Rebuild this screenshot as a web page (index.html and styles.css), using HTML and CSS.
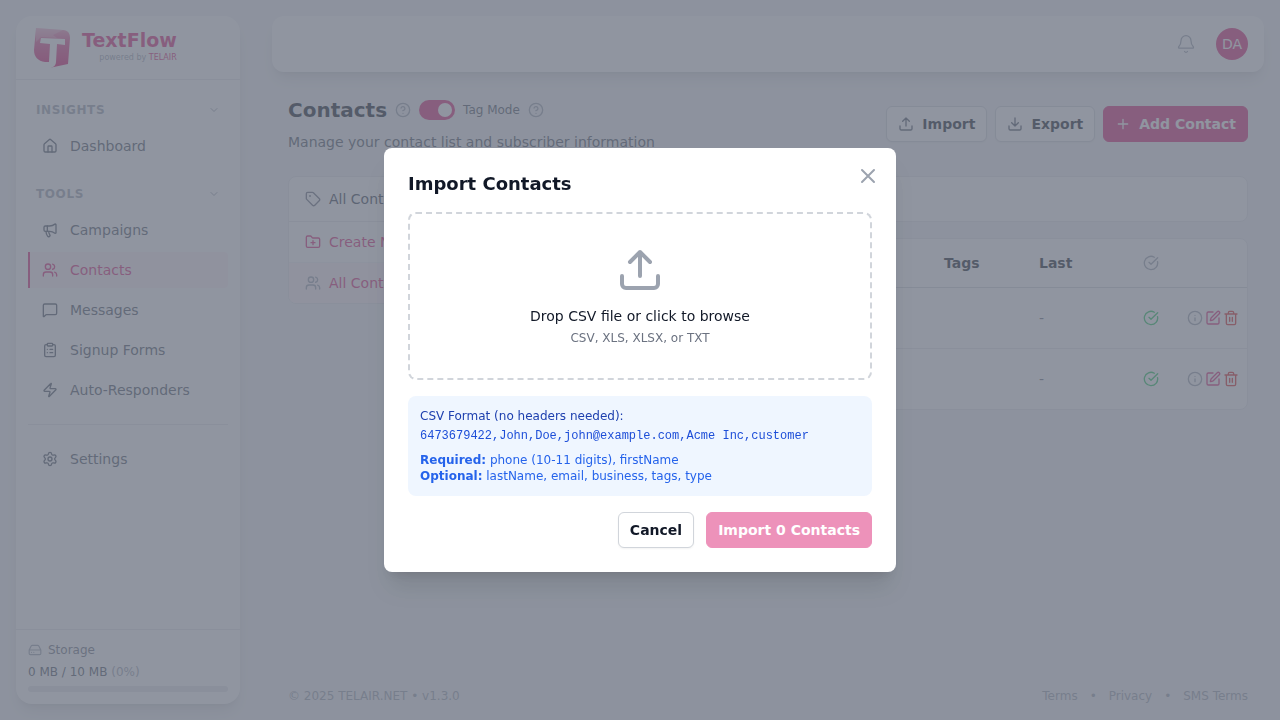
FILE: index.html
```html
<!DOCTYPE html>
<html lang="en">

<head>
    <meta charset="UTF-8">
    <meta name="viewport" content="width=device-width, initial-scale=1">
    <title>Contacts - TextFlow</title>
    <link rel="stylesheet" href="styles.css">
</head>

<body>
    <!-- shared icons -->
    <svg class="sprite" aria-hidden="true">
        <symbol id="i-chevron" viewBox="0 0 24 24"><path d="m6 9 6 6 6-6"/></symbol>
        <symbol id="i-help" viewBox="0 0 24 24"><circle cx="12" cy="12" r="10"/><path d="M9.09 9a3 3 0 0 1 5.83 1c0 2-3 3-3 3M12 17h.01"/></symbol>
        <symbol id="i-users" viewBox="0 0 24 24"><path d="M16 21v-2a4 4 0 0 0-4-4H6a4 4 0 0 0-4 4v2M16 3.128a4 4 0 0 1 0 7.744M22 21v-2a4 4 0 0 0-3-3.87"/><circle cx="9" cy="7" r="4"/></symbol>
        <symbol id="i-upload" viewBox="0 0 24 24"><path d="M12 3v12M17 8l-5-5-5 5M21 15v4a2 2 0 0 1-2 2H5a2 2 0 0 1-2-2v-4"/></symbol>
        <symbol id="i-check" viewBox="0 0 24 24"><path d="M21.801 10A10 10 0 1 1 17 3.335M9 11l3 3L22 4"/></symbol>
        <symbol id="i-info" viewBox="0 0 24 24"><circle cx="12" cy="12" r="10"/><path d="M12 16v-4M12 8h.01"/></symbol>
        <symbol id="i-edit" viewBox="0 0 24 24"><path d="M12 3H5a2 2 0 0 0-2 2v14a2 2 0 0 0 2 2h14a2 2 0 0 0 2-2v-7"/><path d="M18.375 2.625a1 1 0 0 1 3 3l-9.013 9.014a2 2 0 0 1-.853.505l-2.873.84a.5.5 0 0 1-.62-.62l.84-2.873a2 2 0 0 1 .506-.852z"/></symbol>
        <symbol id="i-trash" viewBox="0 0 24 24"><path d="M3 6h18M19 6v14a2 2 0 0 1-2 2H7a2 2 0 0 1-2-2V6M8 6V4a2 2 0 0 1 2-2h4a2 2 0 0 1 2 2v2M10 11v6M14 11v6"/></symbol>
    </svg>

    <div class="layout">
        <aside class="sidebar">
            <div class="brand">
                <svg class="brand-logo" viewBox="0 0 40 40" aria-hidden="true">
                    <defs>
                        <linearGradient id="logo-fill" x1="0" y1="0" x2="0" y2="1">
                            <stop offset="0" stop-color="#f29cc0"/>
                            <stop offset=".35" stop-color="#e0508f"/>
                            <stop offset="1" stop-color="#d40f68"/>
                        </linearGradient>
                    </defs>
                    <path fill="url(#logo-fill)" d="M4 0l27 2c5 .5 7 3 7 8l-2 26-19 4 3-6h-7C6 33 2 29 2 22z"/>
                    <path fill="#fff" d="M9 10l24 1v6l-8-1-1 18c0 3-2 5-5 6h-2c-2 0-2-1-2-3 1 0 2-1 2-3l1-18-10-1z"/>
                    <path fill="#fff" opacity=".25" d="M4 0l27 2-10 5 4 3-16-1-5 5z"/>
                </svg>
                <div class="brand-text">
                    <div class="brand-name">TextFlow</div>
                    <div class="brand-sub">powered by <span>TELAIR</span></div>
                </div>
            </div>

            <nav class="nav">
                <button class="nav-group" type="button">INSIGHTS <svg class="icon icon-sm"><use href="#i-chevron"/></svg></button>
                <a class="nav-item" href="#">
                    <svg class="icon" viewBox="0 0 24 24"><path d="M15 21v-8a1 1 0 0 0-1-1h-4a1 1 0 0 0-1 1v8"/><path d="M3 10a2 2 0 0 1 .709-1.528l7-5.999a2 2 0 0 1 2.582 0l7 5.999A2 2 0 0 1 21 10v9a2 2 0 0 1-2 2H5a2 2 0 0 1-2-2z"/></svg>
                    Dashboard
                </a>
                <button class="nav-group nav-group-next" type="button">TOOLS <svg class="icon icon-sm"><use href="#i-chevron"/></svg></button>
                <a class="nav-item" href="#">
                    <svg class="icon" viewBox="0 0 24 24"><path d="M11 6a13 13 0 0 0 8.4-2.8A1 1 0 0 1 21 4v12a1 1 0 0 1-1.6.8A13 13 0 0 0 11 14H5a2 2 0 0 1-2-2V8a2 2 0 0 1 2-2z"/><path d="M6 14a12 12 0 0 0 2.4 7.2 2 2 0 0 0 3.2-2.4A8 8 0 0 1 10 14M8 6v8"/></svg>
                    Campaigns
                </a>
                <a class="nav-item active" href="#"><svg class="icon"><use href="#i-users"/></svg> Contacts</a>
                <a class="nav-item" href="#">
                    <svg class="icon" viewBox="0 0 24 24"><path d="M22 17a2 2 0 0 1-2 2H6.828a2 2 0 0 0-1.414.586l-2.202 2.202A.71.71 0 0 1 2 21.286V5a2 2 0 0 1 2-2h16a2 2 0 0 1 2 2z"/></svg>
                    Messages
                </a>
                <a class="nav-item" href="#">
                    <svg class="icon" viewBox="0 0 24 24"><rect x="8" y="2" width="8" height="4" rx="1"/><path d="M16 4h2a2 2 0 0 1 2 2v14a2 2 0 0 1-2 2H6a2 2 0 0 1-2-2V6a2 2 0 0 1 2-2h2M12 11h4M12 16h4M8 11h.01M8 16h.01"/></svg>
                    Signup Forms
                </a>
                <a class="nav-item" href="#">
                    <svg class="icon" viewBox="0 0 24 24"><path d="M4 14a1 1 0 0 1-.78-1.63l9.9-10.2a.5.5 0 0 1 .86.46l-1.92 6.02A1 1 0 0 0 13 10h7a1 1 0 0 1 .78 1.63l-9.9 10.2a.5.5 0 0 1-.86-.46l1.92-6.02A1 1 0 0 0 11 14z"/></svg>
                    Auto-Responders
                </a>
                <hr class="nav-line">
                <a class="nav-item" href="#">
                    <svg class="icon" viewBox="0 0 24 24"><path d="M9.671 4.136a2.34 2.34 0 0 1 4.659 0 2.34 2.34 0 0 0 3.319 1.915 2.34 2.34 0 0 1 2.33 4.033 2.34 2.34 0 0 0 0 3.831 2.34 2.34 0 0 1-2.33 4.033 2.34 2.34 0 0 0-3.319 1.915 2.34 2.34 0 0 1-4.659 0 2.34 2.34 0 0 0-3.32-1.915 2.34 2.34 0 0 1-2.33-4.033 2.34 2.34 0 0 0 0-3.831A2.34 2.34 0 0 1 6.35 6.051a2.34 2.34 0 0 0 3.319-1.915"/><circle cx="12" cy="12" r="3"/></svg>
                    Settings
                </a>
            </nav>

            <div class="storage">
                <div class="storage-title">
                    <svg class="icon icon-md" viewBox="0 0 24 24"><path d="M22 12H2M5.45 5.11 2 12v6a2 2 0 0 0 2 2h16a2 2 0 0 0 2-2v-6l-3.45-6.89A2 2 0 0 0 16.76 4H7.24a2 2 0 0 0-1.79 1.11zM6 16h.01M10 16h.01"/></svg>
                    Storage
                </div>
                <div class="storage-used">0 MB / 10 MB <span>(0%)</span></div>
                <div class="storage-bar"></div>
            </div>
        </aside>

        <div class="content">
            <header class="topbar">
                <button class="bell" type="button" aria-label="Notifications">
                    <svg class="icon icon-lg thin" viewBox="0 0 24 24"><path d="M10.268 21a2 2 0 0 0 3.464 0M3.262 15.326A1 1 0 0 0 4 17h16a1 1 0 0 0 .74-1.673C19.41 13.956 18 12.499 18 8A6 6 0 0 0 6 8c0 4.499-1.411 5.956-2.738 7.326"/></svg>
                </button>
                <button class="avatar" type="button">DA</button>
            </header>

            <main class="page">
                <div class="page-head">
                    <div>
                        <div class="title-row">
                            <h1>Contacts</h1>
                            <svg class="icon help"><use href="#i-help"/></svg>
                            <input class="toggle" type="checkbox" id="tag-mode" checked>
                            <label for="tag-mode">Tag Mode</label>
                            <svg class="icon help"><use href="#i-help"/></svg>
                        </div>
                        <p class="subtitle">Manage your contact list and subscriber information</p>
                    </div>
                    <div class="actions">
                        <button class="btn" type="button"><svg class="icon"><use href="#i-upload"/></svg> Import</button>
                        <button class="btn" type="button"><svg class="icon" viewBox="0 0 24 24"><path d="M12 15V3M21 15v4a2 2 0 0 1-2 2H5a2 2 0 0 1-2-2v-4M7 10l5 5 5-5"/></svg> Export</button>
                        <button class="btn btn-primary" type="button"><svg class="icon" viewBox="0 0 24 24"><path d="M5 12h14M12 5v14"/></svg> Add Contact</button>
                    </div>
                </div>

                <div class="columns">
                    <div class="card tags">
                        <a class="tag-row tag-head" href="#">
                            <svg class="icon" viewBox="0 0 24 24"><path d="M12.586 2.586A2 2 0 0 0 11.172 2H4a2 2 0 0 0-2 2v7.172a2 2 0 0 0 .586 1.414l8.704 8.704a2.426 2.426 0 0 0 3.42 0l6.58-6.58a2.426 2.426 0 0 0 0-3.42z"/><circle cx="7.5" cy="7.5" r=".5"/></svg>
                            All Contacts
                        </a>
                        <a class="tag-row tag-create" href="#">
                            <svg class="icon" viewBox="0 0 24 24"><path d="M12 10v6M9 13h6M20 20a2 2 0 0 0 2-2V8a2 2 0 0 0-2-2h-7.900a2 2 0 0 1-1.690-.900L9.600 3.900A2 2 0 0 0 7.930 3H4a2 2 0 0 0-2 2v13a2 2 0 0 0 2 2Z"/></svg>
                            Create New Tag
                        </a>
                        <a class="tag-row tag-active" href="#"><svg class="icon"><use href="#i-users"/></svg> All Contacts</a>
                    </div>
                    <div class="list">
                        <div class="card filter"></div>
                        <div class="card">
                            <table class="contacts">
                                <colgroup>
                                    <col>
                                    <col class="col-tags">
                                    <col class="col-last">
                                    <col class="col-status">
                                    <col class="col-actions">
                                </colgroup>
                                <thead>
                                    <tr>
                                        <th></th>
                                        <th>Tags</th>
                                        <th>Last</th>
                                        <th><svg class="icon muted"><use href="#i-check"/></svg></th>
                                        <th></th>
                                    </tr>
                                </thead>
                                <tbody>
                                    <tr>
                                        <td></td>
                                        <td></td>
                                        <td>-</td>
                                        <td><svg class="icon ok"><use href="#i-check"/></svg></td>
                                        <td>
                                            <div class="row-actions">
                                                <button type="button" aria-label="Details"><svg class="icon muted"><use href="#i-info"/></svg></button>
                                                <button type="button" aria-label="Edit"><svg class="icon edit"><use href="#i-edit"/></svg></button>
                                                <button type="button" aria-label="Delete"><svg class="icon delete"><use href="#i-trash"/></svg></button>
                                            </div>
                                        </td>
                                    </tr>
                                    <tr>
                                        <td></td>
                                        <td></td>
                                        <td>-</td>
                                        <td><svg class="icon ok"><use href="#i-check"/></svg></td>
                                        <td>
                                            <div class="row-actions">
                                                <button type="button" aria-label="Details"><svg class="icon muted"><use href="#i-info"/></svg></button>
                                                <button type="button" aria-label="Edit"><svg class="icon edit"><use href="#i-edit"/></svg></button>
                                                <button type="button" aria-label="Delete"><svg class="icon delete"><use href="#i-trash"/></svg></button>
                                            </div>
                                        </td>
                                    </tr>
                                </tbody>
                            </table>
                        </div>
                    </div>
                </div>
            </main>

            <footer class="footer">
                <span>© 2025 TELAIR.NET • v1.3.0</span>
                <div class="footer-links">
                    <a href="#">Terms</a><span>•</span><a href="#">Privacy</a><span>•</span><a href="#">SMS Terms</a>
                </div>
            </footer>
        </div>
    </div>

    <div class="overlay">
        <div class="modal" role="dialog" aria-modal="true" aria-labelledby="modal-title">
            <button class="modal-close" type="button" aria-label="Close">
                <svg class="icon icon-xl" viewBox="0 0 24 24"><path d="M6 18 18 6M6 6l12 12"/></svg>
            </button>
            <h2 id="modal-title">Import Contacts</h2>
            <input class="file-input" type="file" id="csv" accept=".csv,.xls,.xlsx,.txt">
            <label class="dropzone" for="csv">
                <svg class="icon drop-icon"><use href="#i-upload"/></svg>
                <span class="drop-title">Drop CSV file or click to browse</span>
                <span class="drop-types">CSV, XLS, XLSX, or TXT</span>
            </label>
            <div class="format">
                <p class="format-title">CSV Format (no headers needed):</p>
                <code>6473679422,John,Doe,john@example.com,Acme Inc,customer</code>
                <p><strong>Required:</strong> phone (10-11 digits), firstName</p>
                <p><strong>Optional:</strong> lastName, email, business, tags, type</p>
            </div>
            <div class="modal-actions">
                <button class="btn" type="button">Cancel</button>
                <button class="btn btn-primary" type="button" disabled>Import 0 Contacts</button>
            </div>
        </div>
    </div>
</body>

</html>
```

FILE: styles.css
```css
* {
    box-sizing: border-box;
}

body {
    margin: 0;
    background-color: #f3f4f6;
    color: #111827;
    font-family: "DejaVu Sans", sans-serif;
    font-size: 14px;
    line-height: 20px;
}

h1,
h2,
p {
    margin: 0;
}

a {
    color: inherit;
    text-decoration: none;
}

button {
    border: 0;
    padding: 0;
    background: none;
    color: inherit;
    font: inherit;
    cursor: pointer;
}

.sprite {
    display: none;
}

.icon {
    display: block;
    flex: none;
    width: 16px;
    height: 16px;
    fill: none;
    stroke: currentColor;
    stroke-width: 2;
    stroke-linecap: round;
    stroke-linejoin: round;
}

.icon-sm {
    width: 12px;
    height: 12px;
}

.icon-md {
    width: 14px;
    height: 14px;
}

.icon-lg {
    width: 20px;
    height: 20px;
}

.icon-xl {
    width: 24px;
    height: 24px;
}

.thin {
    stroke-width: 1.5;
}

.layout {
    display: flex;
    gap: 32px;
    min-height: 100vh;
    padding: 16px;
}

/* sidebar */
.sidebar {
    display: flex;
    flex: none;
    flex-direction: column;
    width: 224px;
    border-radius: 16px;
    background-color: #fff;
    box-shadow: 0 10px 15px -3px rgba(0, 0, 0, 0.1), 0 4px 6px -4px rgba(0, 0, 0, 0.1);
}

.brand {
    display: flex;
    gap: 10px;
    height: 64px;
    padding: 12px 16px;
    border-bottom: 1px solid #e5e7eb;
}

.brand-logo {
    width: 40px;
    height: 40px;
}

.brand-text {
    text-align: right;
}

.brand-name {
    color: #db2777;
    font-size: 19px;
    font-weight: bold;
    line-height: 24px;
}

.brand-sub {
    color: #9ca3af;
    font-size: 8px;
    line-height: 12px;
}

.brand-sub span {
    color: #db2777;
}

.nav {
    display: flex;
    flex: 1;
    flex-direction: column;
    gap: 4px;
    padding: 16px 12px;
}

.nav-group {
    display: flex;
    align-items: center;
    justify-content: space-between;
    height: 28px;
    padding: 0 8px;
    color: #9ca3af;
    font-size: 12px;
    font-weight: bold;
    letter-spacing: 0.05em;
}

.nav-group-next {
    margin-top: 12px;
}

.nav-item {
    display: flex;
    align-items: center;
    gap: 12px;
    height: 36px;
    padding: 0 12px;
    border-left: 2px solid transparent;
    border-radius: 0 4px 4px 0;
    color: #4b5563;
}

.nav-item.active {
    border-left-color: #db2777;
    background-color: #fdf2f8;
    color: #db2777;
}

.nav-line {
    width: 100%;
    margin: 12px 0;
    border: 0;
    border-top: 1px solid #e5e7eb;
}

.storage {
    padding: 12px;
    border-top: 1px solid #e5e7eb;
    font-size: 12px;
    line-height: 16px;
}

.storage-title {
    display: flex;
    align-items: center;
    gap: 6px;
    color: #6b7280;
}

.storage-title .icon {
    color: #9ca3af;
}

.storage-used {
    margin: 6px 0;
    color: #4b5563;
}

.storage-used span {
    color: #9ca3af;
}

.storage-bar {
    height: 6px;
    border-radius: 3px;
    background-color: #e5e7eb;
}

/* top bar */
.content {
    display: flex;
    flex: 1;
    flex-direction: column;
    min-width: 0;
}

.topbar {
    display: flex;
    align-items: center;
    justify-content: flex-end;
    gap: 20px;
    height: 56px;
    padding: 0 16px;
    border-radius: 12px;
    background-color: #fff;
    box-shadow: 0 10px 15px -3px rgba(0, 0, 0, 0.1), 0 4px 6px -4px rgba(0, 0, 0, 0.1);
}

.bell {
    color: #9ca3af;
}

.avatar {
    width: 32px;
    height: 32px;
    border-radius: 50%;
    background-color: #db2777;
    color: #fff;
}

/* page */
.page {
    flex: 1;
    padding: 24px 16px;
}

.page-head {
    display: flex;
    align-items: center;
    justify-content: space-between;
    margin-bottom: 24px;
}

.title-row {
    display: flex;
    align-items: center;
    gap: 8px;
    font-size: 12px;
    color: #4b5563;
}

h1 {
    color: #111827;
    font-size: 20px;
    line-height: 28px;
}

.help {
    color: #9ca3af;
}

.toggle {
    appearance: none;
    width: 36px;
    height: 20px;
    margin: 0;
    padding: 3px;
    border-radius: 10px;
    background-color: #d1d5db;
}

.toggle::before {
    content: "";
    display: block;
    width: 14px;
    height: 14px;
    border-radius: 50%;
    background-color: #fff;
}

.toggle:checked {
    background-color: #db2777;
}

.toggle:checked::before {
    margin-left: auto;
}

.subtitle {
    margin-top: 8px;
    color: #4b5563;
}

.actions {
    display: flex;
    gap: 8px;
}

.btn {
    display: flex;
    align-items: center;
    gap: 8px;
    height: 36px;
    padding: 0 11px;
    border: 1px solid #d1d5db;
    border-radius: 6px;
    background-color: #fff;
    box-shadow: 0 1px 2px rgba(0, 0, 0, 0.05);
    color: #111827;
    font-weight: bold;
}

.btn .icon {
    color: #4b5563;
}

.btn-primary {
    border-color: #db2777;
    background-color: #db2777;
    box-shadow: none;
    color: #fff;
}

.btn-primary .icon {
    color: #fff;
}

.btn:disabled {
    opacity: 0.5;
}

.columns {
    display: flex;
    align-items: flex-start;
    gap: 16px;
}

.card {
    overflow: hidden;
    border: 1px solid #e5e7eb;
    border-radius: 8px;
    background-color: #fff;
}

.tags {
    flex: none;
    width: 256px;
}

.tag-row {
    display: flex;
    align-items: center;
    gap: 8px;
    height: 40px;
    padding: 0 16px;
}

.tag-head {
    height: 45px;
    border-bottom: 1px solid #e5e7eb;
    color: #374151;
}

.tag-head .icon {
    color: #6b7280;
}

.tag-create {
    color: #db2777;
}

.tag-active {
    height: 41px;
    border-top: 1px solid #f3f4f6;
    background-color: #fdf2f8;
    color: #db2777;
}

.tag-active .icon {
    color: #9ca3af;
}

.list {
    display: flex;
    flex: 1;
    flex-direction: column;
    gap: 16px;
}

.filter {
    height: 46px;
}

.contacts {
    width: 100%;
    table-layout: fixed;
    border-collapse: collapse;
}

.col-tags {
    width: 95px;
}

.col-last {
    width: 104px;
}

.col-status {
    width: 44px;
}

.col-actions {
    width: 60px;
}

.contacts th,
.contacts td {
    padding: 0;
    text-align: left;
}

.contacts th {
    height: 48px;
    border-bottom: 1px solid #d1d5db;
}

.contacts td {
    height: 61px;
    color: #6b7280;
}

.contacts tbody tr + tr td {
    border-top: 1px solid #e5e7eb;
}

.row-actions {
    display: flex;
    gap: 2px;
}

.muted {
    color: #9ca3af;
}

.ok {
    color: #22c55e;
}

.edit {
    color: #db2777;
}

.delete {
    color: #dc2626;
}

.footer {
    display: flex;
    justify-content: space-between;
    padding: 0 16px;
    color: #9ca3af;
    font-size: 12px;
    line-height: 16px;
}

.footer-links {
    display: flex;
    gap: 12px;
}

/* import dialog */
.overlay {
    position: fixed;
    inset: 0;
    display: flex;
    align-items: center;
    justify-content: center;
    background-color: rgba(107, 114, 128, 0.75);
}

.modal {
    position: relative;
    width: 100%;
    max-width: 512px;
    padding: 24px;
    border-radius: 8px;
    background-color: #fff;
    box-shadow: 0 20px 25px -5px rgba(0, 0, 0, 0.1), 0 8px 10px -6px rgba(0, 0, 0, 0.1);
}

.modal-close {
    position: absolute;
    top: 16px;
    right: 16px;
    color: #9ca3af;
}

h2 {
    margin-bottom: 16px;
    font-size: 18px;
    line-height: 24px;
}

.file-input {
    position: absolute;
    width: 1px;
    height: 1px;
    opacity: 0;
}

.dropzone {
    display: flex;
    flex-direction: column;
    align-items: center;
    padding: 32px;
    border: 2px dashed #d1d5db;
    border-radius: 8px;
    cursor: pointer;
}

.drop-icon {
    width: 48px;
    height: 48px;
    margin-bottom: 12px;
    color: #9ca3af;
}

.drop-types {
    margin-top: 4px;
    color: #6b7280;
    font-size: 12px;
    line-height: 16px;
}

.format {
    margin: 16px 0;
    padding: 12px;
    border-radius: 8px;
    background-color: #eff6ff;
    color: #2563eb;
    font-size: 12px;
    line-height: 16px;
}

.format-title {
    color: #1e40af;
}

.format code {
    display: block;
    margin: 4px 0 8px;
    color: #1d4ed8;
    font-family: "Liberation Mono", monospace;
    font-size: 12px;
}

.modal-actions {
    display: flex;
    justify-content: flex-end;
    gap: 12px;
}
```
